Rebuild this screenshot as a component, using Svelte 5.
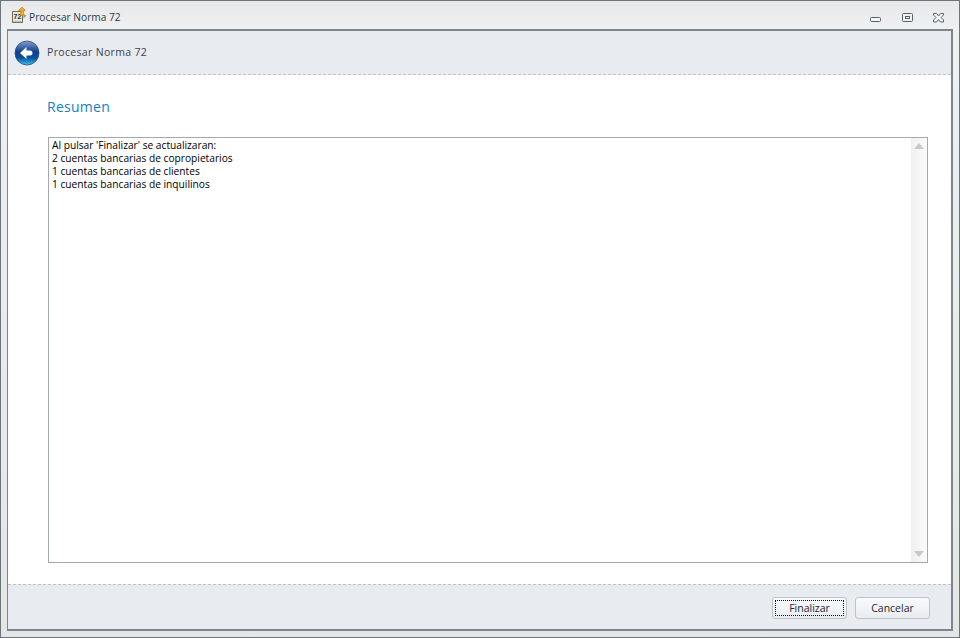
<script>
  const lines = ["Al pulsar 'Finalizar' se actualizaran:", "2 cuentas bancarias de copropietarios", "1 cuentas bancarias de clientes", "1 cuentas bancarias de inquilinos"];
</script>

<div class="window">
  <div class="titlebar">
    <svg class="appicon" width="18" height="18" viewBox="0 0 18 18">
      <path d="M2.5 5.500h10v11h-10z" fill="#e9e6dc" stroke="#6d6a60"/>
      <path d="M3 15.500h9v1H3z" fill="#8d8a7e"/>
      <text x="3.500" y="13" class="icontext">72</text>
      <path d="M12 1l3.500 3.500h-2v5h-3v-5h-2z" fill="#f0a52c" stroke="#c9791a" stroke-width=".6"/>
      <path d="M13.500 8l3 1.500-3 3z" fill="#7cb342"/>
    </svg>
    <span class="title">Procesar Norma 72</span>
    <div class="controls">
      <svg class="min" width="12" height="6" viewBox="0 0 12 6"><rect x=".5" y=".5" width="10" height="4" rx="1" fill="#f4f5f6" stroke="#59636b"/></svg>
      <svg width="12" height="10" viewBox="0 0 12 10"><rect x=".5" y=".5" width="10" height="8" rx="1" fill="#eef0f1" stroke="#59636b"/><rect x="3.500" y="3.500" width="4" height="2" fill="none" stroke="#59636b"/></svg>
      <svg width="12" height="10" viewBox="0 0 12 10"><path d="M.5.5h3L5.500 3 7.500.5h3v1.500L8 4.500l2.500 2.500v2h-3L5.500 6.500 3.500 9h-3V7L3 4.500.5 2z" fill="#f4f5f6" stroke="#59636b"/></svg>
    </div>
  </div>

  <div class="panel">
    <header class="head">
      <svg width="26" height="26" viewBox="0 0 26 26">
        <defs>
          <linearGradient id="orb" x1="0" y1="0" x2="0" y2="1">
            <stop offset="0" stop-color="#7f9fd0"/>
            <stop offset=".45" stop-color="#123f8c"/>
            <stop offset=".7" stop-color="#0a4f9e"/>
            <stop offset="1" stop-color="#38c0ee"/>
          </linearGradient>
        </defs>
        <circle cx="13" cy="13" r="12" fill="url(#orb)" stroke="#2a4f85" stroke-width=".8"/>
        <path d="M6 13l6.500-6v3.500h3.500a2.500 2.500 0 0 1 0 5h-3.500V19z" fill="#fff"/>
      </svg>
      <span class="headtitle">Procesar Norma 72</span>
    </header>

    <main class="body">
      <h1>Resumen</h1>
      <div class="box">
        <div class="text">
          {#each lines as line}
            <div>{line}</div>
          {/each}
        </div>
        <div class="scroll">
          <span class="up"></span>
          <span class="down"></span>
        </div>
      </div>
    </main>

    <footer class="foot">
      <button class="btn focused"><span>Finalizar</span></button>
      <button class="btn"><span>Cancelar</span></button>
    </footer>
  </div>
</div>

<style>
  :global(body) { margin: 0; }
  .window {
    width: 960px; height: 638px; box-sizing: border-box;
    display: flex; flex-direction: column;
    border: 1px solid #6b757c;
    background: linear-gradient(#e6e8ea, #eff0f1 28px, #e4e6e6);
    padding: 0 6px 6px;
    font-family: "Open Sans", "Noto Sans", sans-serif;
    font-size: 10.5px;
    color: #1c2730;
  }
  .titlebar { height: 28px; flex: none; display: flex; align-items: center; position: relative; padding: 3px 0 0 3px; box-sizing: border-box; }
  .appicon { margin-top: -4px; }
  .title { margin-left: 1px; font-size: 10.2px; color: #2d3a45; }
  .icontext { font: bold 7px "Liberation Sans", sans-serif; fill: #333; }
  .controls { position: absolute; right: 8px; top: 12px; display: flex; gap: 19px; align-items: flex-start; }
  .min { margin: 4px 1px 0 -1px; }
  .panel { flex: 1; min-height: 0; display: flex; flex-direction: column; border: 1px solid #7e868c; border-width: 2px 2px 2px 1px; background: #fff; }
  .head { height: 44px; flex: none; box-sizing: border-box; background: #e8ebef; border-bottom: 1px dashed #bcc2c7; display: flex; align-items: center; padding-left: 6px; gap: 7px; }
  .headtitle { font-size: 10.5px; color: #3d3f55; letter-spacing: .33px; margin-top: -1px; }
  .body { flex: 1; min-height: 0; display: flex; flex-direction: column; padding: 0 23px 21px 40px; }
  h1 { margin: 22px 0 20px -1px; font-size: 14px; line-height: 20px; font-weight: 400; color: #127fc8; letter-spacing: .27px; }
  .box { flex: 1; min-height: 0; border: 1px solid #a3a9ae; display: flex; background: #fff; }
  .text { flex: 1; padding: 1px 3px; font-size: 10.2px; line-height: 13px; color: #000; }
  .scroll { width: 16px; flex: none; background: linear-gradient(90deg, #f0f0f0, #fbfbfb); display: flex; flex-direction: column; justify-content: space-between; align-items: center; padding: 5px 0; box-sizing: border-box; }
  .up { width: 0; height: 0; border: 5px solid transparent; border-top: 0; border-bottom: 6px solid #c6c9cb; }
  .down { width: 0; height: 0; border: 5px solid transparent; border-bottom: 0; border-top: 6px solid #c6c9cb; }
  .foot { height: 45px; flex: none; box-sizing: border-box; background: #e8ebef; border-top: 1px dashed #bcc2c7; display: flex; justify-content: flex-end; align-items: flex-start; gap: 8px; padding: 12px 21px 0 0; }
  .btn { width: 75px; height: 22px; padding: 2px; border: 1px solid #bcc3c9; border-radius: 3px; background: linear-gradient(#f9fafb, #e9ecef); font: inherit; color: #1c2730; display: block; }
  .btn span { display: flex; width: 100%; height: 100%; align-items: center; justify-content: center; box-sizing: border-box; }
  .focused span { border: 1px dotted #111; }
</style>
